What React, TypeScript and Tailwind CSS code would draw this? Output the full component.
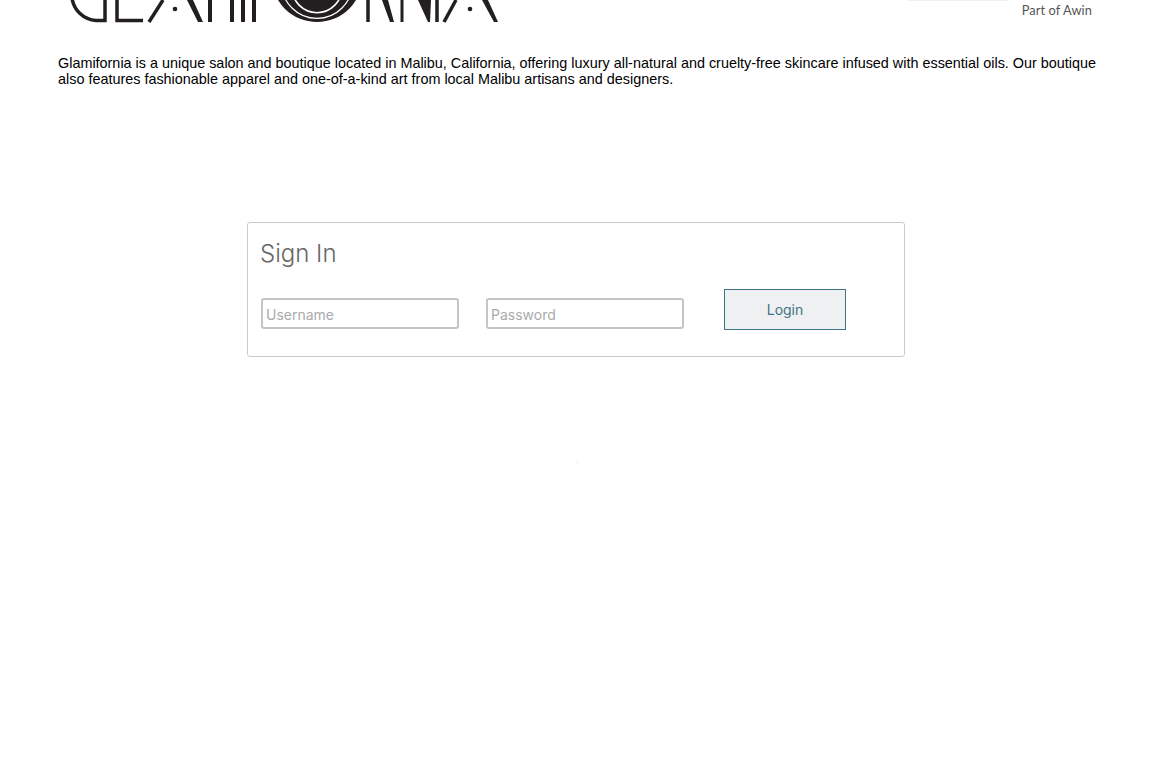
export default function App() {
  return (
    <div className="w-[1152px] h-[768px] bg-white overflow-hidden">
      <header className="h-[22px] flex justify-between pl-[60px] pr-[60px]">
        <svg width="450" height="23" viewBox="60 0 450 23" className="shrink-0" fill="none" stroke="#231f20" strokeWidth="3.5">
          <path d="M72 -2 A26 26 0 0 0 96 20.5 H105 V0" />
          <path d="M117 0 V20.5 H143" />
          <path d="M149 22 L163 0" />
          <circle cx="175" cy="9" r="2.3" fill="#231f20" stroke="none" />
          <path d="M187 0 H193 L203 22 H198 Z" fill="#231f20" stroke="none" />
          <path d="M210 0 V22" strokeWidth="4" />
          <path d="M232 0 V22 M243 0 V22 M254 0 V22" strokeWidth="4" />
          <circle cx="317" cy="-23.6" r="45.6" fill="#231f20" stroke="none" />
          <circle cx="317" cy="-17" r="35.4" stroke="#ffffff" strokeWidth="1.2" />
          <circle cx="317" cy="-12.2" r="24.9" stroke="#ffffff" strokeWidth="1.6" />
          <path d="M368 0 V22" strokeWidth="3.5" />
          <path d="M382 0 H388 L394 22 H390 Z" fill="#231f20" stroke="none" />
          <path d="M402 0 V22" strokeWidth="3" />
          <path d="M418 0 H431 L430 22 H428 Z" fill="#231f20" stroke="none" />
          <path d="M437 0 V22" strokeWidth="3.5" />
          <path d="M444 22 L456 0" strokeWidth="3.5" />
          <circle cx="470" cy="9" r="2.3" fill="#231f20" stroke="none" />
          <path d="M482 0 H488 L498 22 H494 Z" fill="#231f20" stroke="none" />
        </svg>
        <div className="w-[184px] flex flex-col items-end">
          <div className="w-[100px] h-[1px] bg-[#f0f0f0] self-start"></div>
          <div className="mt-[1px] text-[12.8px] leading-4 tracking-[0.1px] text-[#555] font-['Lato',sans-serif]">Part of Awin</div>
        </div>
      </header>
      <p className="mt-[33px] ml-[58px] mr-[54px] text-[14.4px] leading-[16px] text-black font-['Liberation_Sans',Arial,sans-serif]">
        Glamifornia is a unique salon and boutique located in Malibu, California, offering luxury all-natural and cruelty-free skincare infused with essential oils. Our boutique also features fashionable apparel and one-of-a-kind art from local Malibu artisans and designers.
      </p>
      <main className="mt-[135px] mx-auto w-[658px] h-[135px] border border-[#ccc] rounded-[3px] px-[13px] font-['Inter',sans-serif]">
        <h1 className="mt-[16px] -ml-[1px] text-[24px] leading-[29px] font-light text-[#666]">Sign In</h1>
        <form className="flex items-start gap-[27px] mt-[30px]">
          <input placeholder="Username" className="w-[198px] h-[31px] border-2 border-[#c4c4c4] rounded-[3px] px-[3px] pt-[1px] text-[14px] placeholder:text-[#aaa] outline-none" />
          <input placeholder="Password" className="w-[198px] h-[31px] border-2 border-[#c4c4c4] rounded-[3px] px-[3px] pt-[1px] text-[14px] placeholder:text-[#aaa] outline-none" />
          <button type="button" className="w-[122px] h-[41px] ml-[13px] -mt-[9px] bg-[#eff0f1] border-[1.5px] border-[#3f7488] text-[#3f7488] text-[14px]">Login</button>
        </form>
      </main>
      <div className="mt-[105px] ml-[576px] w-[2px] h-[1px] bg-[#eeeeee]"></div>
    </div>
  );
}
